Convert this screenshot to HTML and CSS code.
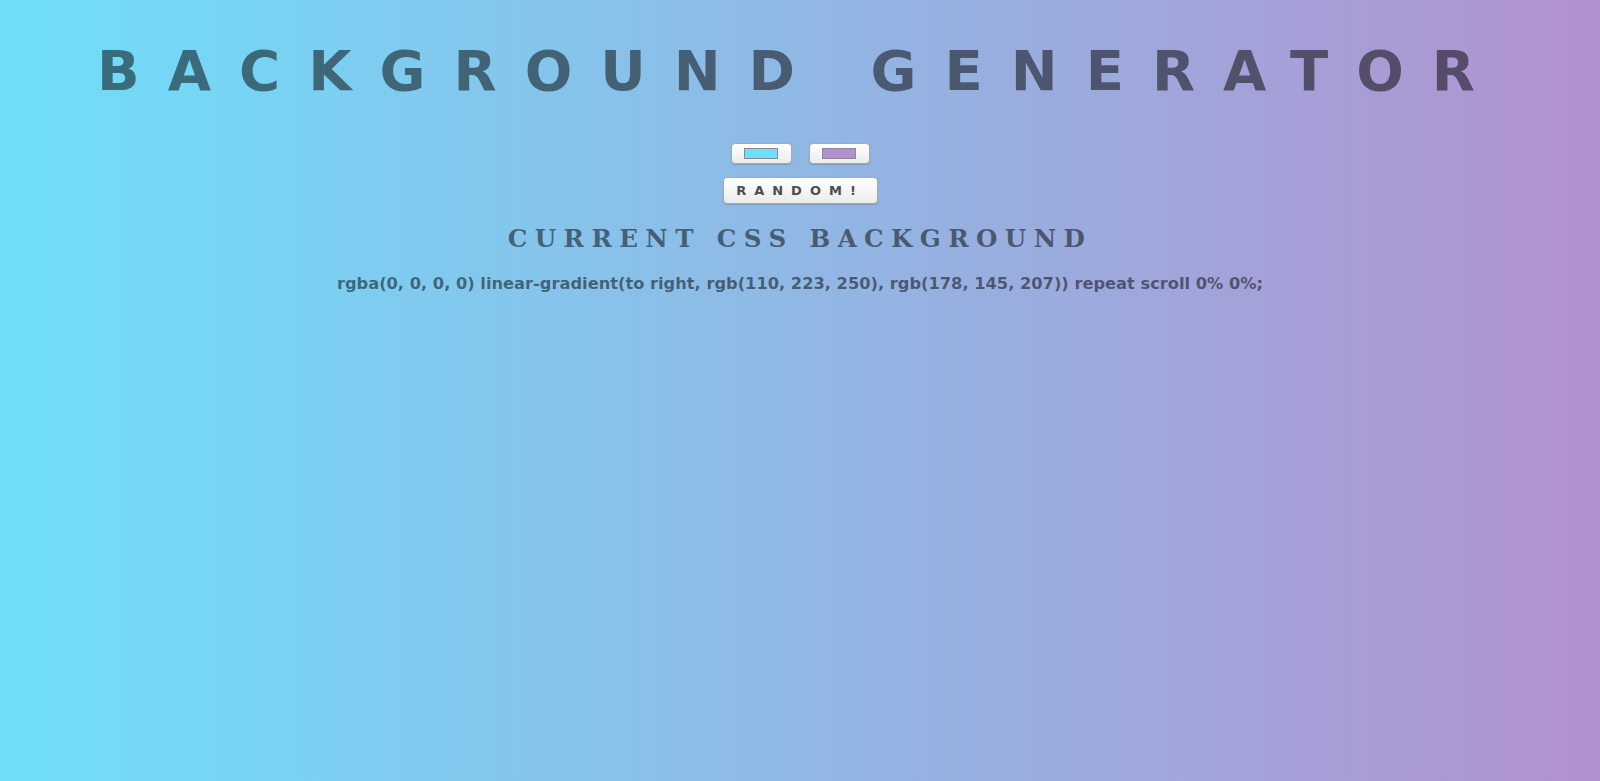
FILE: index.html
```html
<!DOCTYPE html>
<html>
<head>
<meta charset="utf-8">
<title>Background Generator</title>
<link rel="stylesheet" href="styles.css">
</head>
<body class="page">
  <h1 class="title">BACKGROUND GENERATOR</h1>
  <div class="pickers">
    <button class="picker"><span class="swatch swatch-one"></span></button>
    <button class="picker"><span class="swatch swatch-two"></span></button>
  </div>
  <div class="random-row">
    <button class="random">RANDOM!</button>
  </div>
  <h3 class="subtitle">CURRENT CSS BACKGROUND</h3>
  <p class="css-text">rgba(0, 0, 0, 0) linear-gradient(to right, rgb(110, 223, 250), rgb(178, 145, 207)) repeat scroll 0% 0%;</p>
</body>
</html>
```
FILE: styles.css
```css
html, body {
  margin: 0;
  padding: 0;
}
.page {
  min-height: 781px;
  background: linear-gradient(to right, rgb(110, 223, 250), rgb(178, 145, 207));
  text-align: center;
  font-family: "DejaVu Sans", sans-serif;
  color: rgba(0, 0, 0, 0.5);
  display: flex;
  flex-direction: column;
  align-items: center;
}
.title {
  margin: 36px 0 0 0;
  font-family: "DejaVu Sans", sans-serif;
  font-weight: bold;
  font-size: 56px;
  line-height: 70px;
  letter-spacing: 0.5em;
  white-space: nowrap;
}
.pickers {
  margin-top: 37px;
  display: flex;
  gap: 17px;
}
.picker {
  width: 61px;
  height: 21px;
  padding: 0;
  border: 1px solid #a9a9a9;
  border-radius: 4px;
  background: linear-gradient(#ffffff, #ececec);
  box-shadow: 0 1px 1px rgba(0, 0, 0, 0.15);
  display: flex;
  align-items: center;
  justify-content: center;
}
.swatch {
  display: block;
  width: 32px;
  height: 9px;
  border: 1px solid #8a8a8a;
}
.swatch-one { background: rgb(110, 223, 250); }
.swatch-two { background: rgb(178, 145, 207); }
.random-row {
  margin-top: 13px;
}
.random {
  width: 155px;
  height: 27px;
  padding: 0;
  border: 1px solid #a9a9a9;
  border-radius: 4px;
  background: linear-gradient(#ffffff, #ececec);
  box-shadow: 0 1px 1px rgba(0, 0, 0, 0.15);
  font-family: "DejaVu Sans", sans-serif;
  font-weight: bold;
  font-size: 13px;
  letter-spacing: 8px;
  color: #4d4d4d;
}
.subtitle {
  margin: 19px 0 0 0;
  font-family: "DejaVu Serif", serif;
  font-weight: bold;
  font-size: 24.6px;
  line-height: 31px;
  letter-spacing: 0.3em;
  white-space: nowrap;
}
.css-text {
  margin: 20px 0 0 0;
  font-family: "DejaVu Sans", sans-serif;
  font-weight: bold;
  font-size: 16.25px;
  line-height: 20px;
  white-space: nowrap;
}
```
